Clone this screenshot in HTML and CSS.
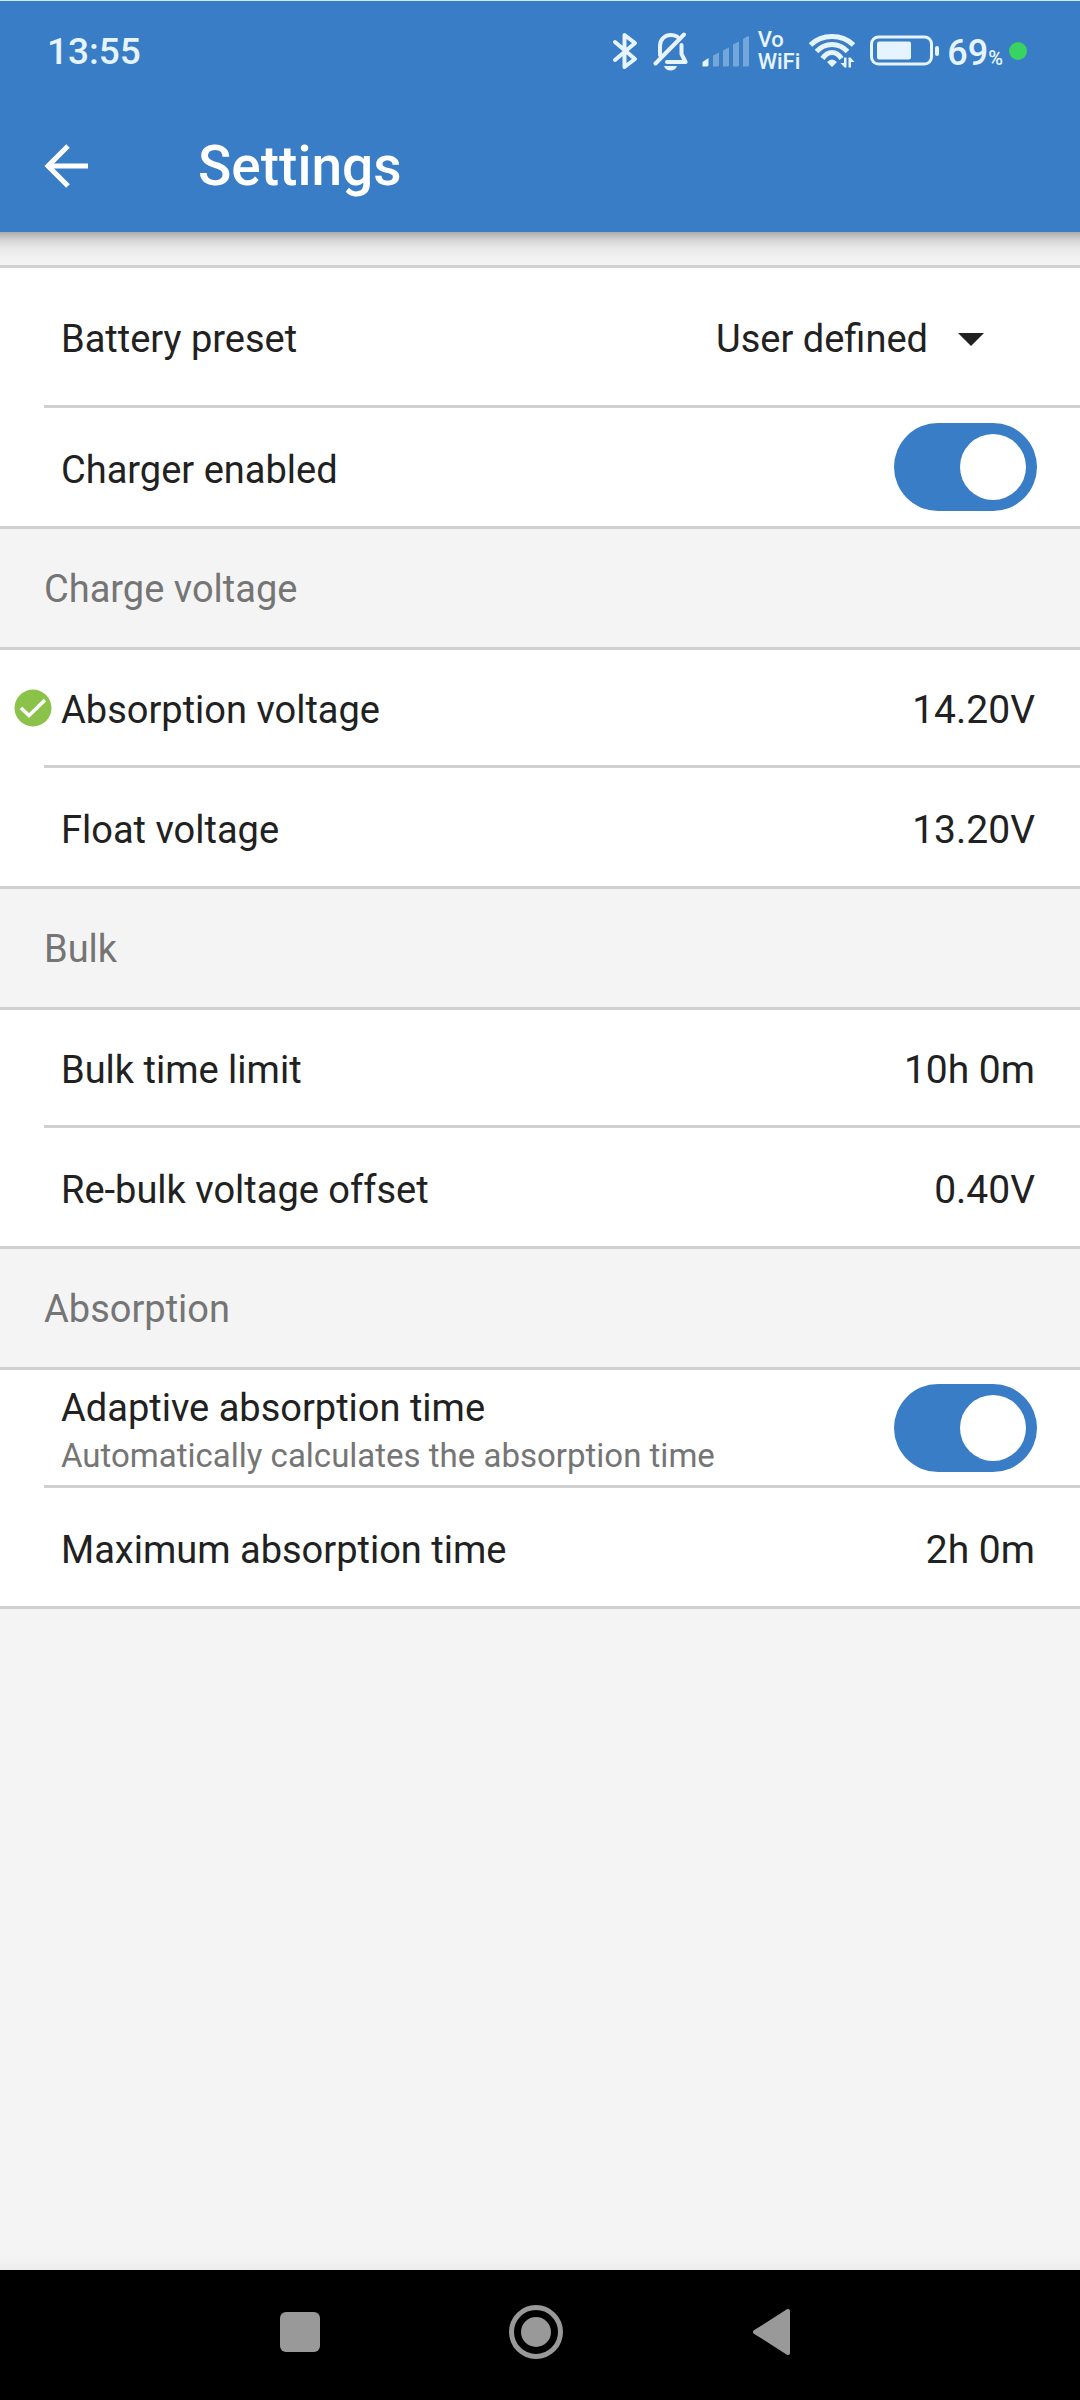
FILE: index.html
```html
<!DOCTYPE html>
<html lang="en">
<head>
<meta charset="utf-8">
<meta name="viewport" content="width=device-width, initial-scale=1">
<title>Settings</title>
<link rel="stylesheet" href="styles.css">
</head>
<body>
<header class="header">
  <div class="status">
    <time class="clock">13:55</time>
    <div class="indicators">
      <svg class="icon-bluetooth" width="26" height="40" viewBox="0 0 26 40" fill="none" stroke="currentColor" stroke-width="4" stroke-linecap="round" stroke-linejoin="round"><path d="M3 11 23 28 12.500 36V4L23 12 3 29"/></svg>
      <svg class="icon-mute" width="36" height="40" viewBox="0 0 36 40"><g fill="none" stroke="currentColor" stroke-width="4" stroke-linecap="round" stroke-linejoin="round"><path d="M7 24V15C7 8 12 4 18 4c2 0 4 .5 6 1.500M28.500 14v9l4 8H14M2.500 32.500 31 3.500"/></g><path d="M11 35h13c-1 3-3.500 4.500-6.500 4.500S12 38 11 35Z" fill="currentColor"/></svg>
      <svg class="icon-signal" width="48" height="32" viewBox="0 0 48 32" fill="currentColor"><path d="M.5 31.500v-4.500l6-4v7q0 1.500-1.500 1.500Z"/><g opacity=".35"><path d="M11 31.500V20.500l6-3V30q0 1.500-1.500 1.500ZM21 31.500V15.500l6-3V30q0 1.500-1.500 1.500ZM31 31.500V9.500l6-3V30q0 1.500-1.500 1.500ZM41 31.500V4l4-2.500q2-1 2 1V30q0 1.500-1.500 1.500Z"/></g></svg>
      <span class="vowifi"><span>Vo</span><span>WiFi</span></span>
      <svg class="icon-wifi" width="46" height="36" viewBox="0 0 46 36"><g fill="none" stroke="currentColor" stroke-width="5"><path d="M1.500 12Q10 3.500 23 3.500T44.500 12M7.500 18.500Q14 11.500 23 11.500T38.500 18.500M13.500 25.500Q17.500 19.500 23 19.500T32.500 25.500"/></g><path d="M23 34 18 29q5-5 10 0ZM31.500 30h3.500v-5.500h2.500v10h-2Zm8 4.500v-10h2l4 4.500h-3.500v5.500Z" fill="currentColor"/></svg>
      <svg class="icon-battery" width="69" height="32" viewBox="0 0 69 32"><rect x="1.500" y="2" width="60" height="27" rx="7" fill="none" stroke="currentColor" stroke-width="3"/><rect x="7" y="6.500" width="34" height="18" rx="2" fill="currentColor"/><rect x="65" y="11" width="4" height="10" rx="2" fill="currentColor"/></svg>
      <span class="percent">69<small>%</small></span>
      <span class="dot"></span>
    </div>
  </div>
  <div class="appbar">
    <button class="back" type="button" aria-label="Back"><svg width="44" height="44" viewBox="0 0 44 44" fill="none" stroke="currentColor" stroke-width="5"><path d="M44 22H4M24 2 4 22l20 20"/></svg></button>
    <h1 class="title">Settings</h1>
  </div>
</header>

<main class="content">
  <section class="group">
    <div class="row row-tall">
      <label class="label" for="preset">Battery preset</label>
      <span class="picker">
        <select class="select" id="preset"><option>User defined</option></select>
        <svg class="caret" width="26" height="13" viewBox="0 0 26 13"><path d="M0 0h26L13 13Z" fill="currentColor"/></svg>
      </span>
    </div>
    <div class="row">
      <label class="label" for="charger">Charger enabled</label>
      <input class="switch" id="charger" type="checkbox" role="switch" checked>
    </div>
  </section>

  <h2 class="heading">Charge voltage</h2>
  <section class="group">
    <div class="row">
      <svg class="check" width="38" height="38" viewBox="0 0 38 38"><circle cx="19" cy="19" r="18.500" fill="#8bc34a"/><path d="M7 19 15 26.500 31 11" fill="none" stroke="#fff" stroke-width="3.500"/></svg>
      <span class="label">Absorption voltage</span><span class="value">14.20V</span>
    </div>
    <div class="row"><span class="label">Float voltage</span><span class="value">13.20V</span></div>
  </section>

  <h2 class="heading">Bulk</h2>
  <section class="group">
    <div class="row"><span class="label">Bulk time limit</span><span class="value">10h 0m</span></div>
    <div class="row"><span class="label">Re-bulk voltage offset</span><span class="value">0.40V</span></div>
  </section>

  <h2 class="heading">Absorption</h2>
  <section class="group">
    <div class="row">
      <label class="label label-double" for="adaptive">Adaptive absorption time<span class="hint">Automatically calculates the absorption time</span></label>
      <input class="switch" id="adaptive" type="checkbox" role="switch" checked>
    </div>
    <div class="row"><span class="label">Maximum absorption time</span><span class="value">2h 0m</span></div>
  </section>
</main>

<nav class="navbar" aria-label="System">
  <button class="nav-button" type="button" aria-label="Recent apps"><svg width="54" height="54" viewBox="0 0 54 54"><rect x="7" y="7" width="40" height="40" rx="6" fill="currentColor"/></svg></button>
  <button class="nav-button" type="button" aria-label="Home"><svg width="54" height="54" viewBox="0 0 54 54"><circle cx="27" cy="27" r="24.500" fill="none" stroke="currentColor" stroke-width="5"/><circle cx="27" cy="27" r="15" fill="currentColor"/></svg></button>
  <button class="nav-button" type="button" aria-label="Back"><svg width="54" height="54" viewBox="0 0 54 54"><path d="M10 27 43 6v42Z" fill="currentColor" stroke="currentColor" stroke-width="4" stroke-linejoin="round"/></svg></button>
</nav>
</body>
</html>
```
FILE: styles.css
```css
* { box-sizing: border-box; }

body {
  margin: 0;
  min-height: 100vh;
  display: flex;
  flex-direction: column;
  background: #f4f4f4;
  color: #212121;
  font-family: Roboto, "Liberation Sans", sans-serif;
  font-size: 38px;
  line-height: 48px;
}

svg { display: block; flex: none; }

button {
  border: 0;
  padding: 0;
  background: none;
  color: inherit;
  font: inherit;
}

.header {
  border-top: 1px solid #cfeef0;
  background: #397dc6;
  color: #fff;
}

.status {
  display: flex;
  justify-content: space-between;
  align-items: center;
  height: 99px;
  padding: 0 53px 0 47px;
  color: #e6f4ff;
}

.clock { padding-top: 2px; font-size: 37px; font-weight: 500; }

.indicators { display: flex; align-items: center; }
.icon-mute { margin-left: 15px; }
.icon-signal { margin-left: 13px; }
.icon-wifi { margin-left: 9px; }
.icon-battery { margin-left: 15px; }

.vowifi {
  display: flex;
  flex-direction: column;
  margin-left: 8px;
  font-size: 22px;
  font-weight: 500;
  line-height: 22px;
}

.percent {
  padding-top: 4px;
  margin-left: 8px;
  font-size: 36px;
  font-weight: 500;
}

.percent small { font-size: 20px; line-height: 20px; }

.dot {
  width: 18px;
  height: 18px;
  margin-left: 6px;
  border-radius: 50%;
  background: #38d362;
}

.appbar {
  display: flex;
  align-items: center;
  gap: 110px;
  height: 132px;
  padding: 0 44px;
}

.title {
  margin: 0;
  font-size: 55px;
  font-weight: 500;
  line-height: 64px;
}

/* The header's shade falls on the strip above the first group */
.content {
  flex: 1;
  padding-top: 33px;
  background:
    linear-gradient(#acacac, #d4d4d4 8px, #e8e8e8 16px, #f1f1f1 26px, #f4f4f4 33px) top / 100% 33px no-repeat,
    linear-gradient(#f4f4f4, #ececec) bottom / 100% 14px no-repeat;
}

.group {
  border-top: 3px solid #d0d0d0;
  border-bottom: 3px solid #d0d0d0;
  padding-left: 44px;
  background: #fff;
}

.row {
  position: relative;
  display: flex;
  align-items: center;
  justify-content: space-between;
  height: 115px;
  padding: 0 45px 0 17px;
}

.row + .row { border-top: 3px solid #d0d0d0; height: 121px; }
.row-tall { height: 137px; }

.label, .value, .picker { padding-top: 5px; }

.label-double { padding-top: 8px; }

.hint {
  display: block;
  color: #757575;
  font-size: 33px;
}

.value { font-size: 39px; white-space: nowrap; }

.heading {
  margin: 0;
  padding: 36px 44px 34px;
  color: #757575;
  font-size: 38px;
  font-weight: 400;
}

.picker {
  position: relative;
  display: flex;
  align-items: center;
}

.select {
  appearance: none;
  field-sizing: content;
  border: 0;
  padding: 0 107px 0 0;
  background: none;
  color: inherit;
  font: inherit;
}

.caret {
  position: absolute;
  right: 51px;
  pointer-events: none;
}

.switch {
  appearance: none;
  display: flex;
  align-items: center;
  justify-content: flex-end;
  flex: none;
  width: 143px;
  height: 88px;
  margin: 0 -2px 0 0;
  padding: 11px;
  border-radius: 44px;
  background: #397dc6;
}

.switch::before {
  content: "";
  width: 66px;
  height: 66px;
  border-radius: 50%;
  background: #fff;
}

.switch:not(:checked) { justify-content: flex-start; background: #9e9e9e; }

/* Confirmation badge in the gutter left of the label */
.check {
  position: absolute;
  left: -30px;
}

.navbar {
  display: flex;
  justify-content: center;
  gap: 182px;
  height: 130px;
  padding: 0 8px 6px 0;
  background: #000;
  color: #999;
}

.nav-button {
  display: flex;
  align-items: center;
}
```
